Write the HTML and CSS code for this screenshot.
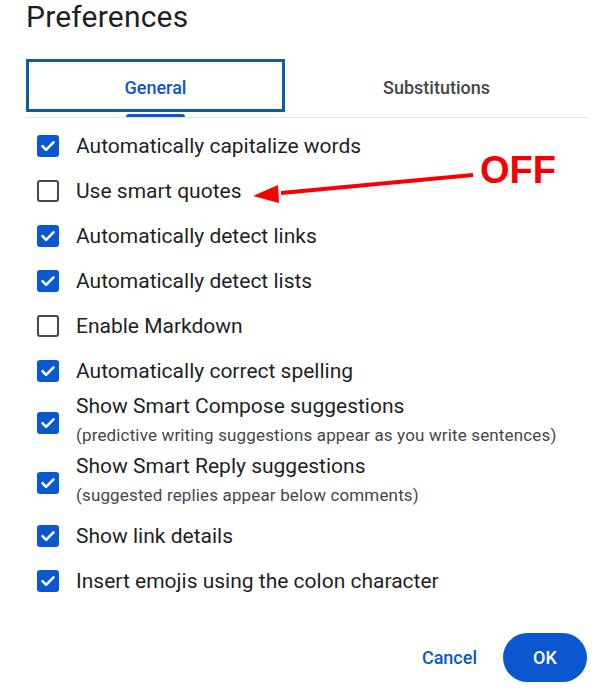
FILE: index.html
```html
<!DOCTYPE html>
<html lang="en">
<head>
<meta charset="utf-8">
<title>Preferences</title>
<link rel="stylesheet" href="styles.css">
</head>
<body>
<div class="dialog">
  <h1 class="title">Preferences</h1>
  <div class="tabs">
    <div class="tab tab-active">
      <div class="tab-label">General</div>
      <div class="tab-indicator"></div>
    </div>
    <div class="tab tab-other">
      <div class="tab-label">Substitutions</div>
    </div>
  </div>
  <ul class="options">
    <li class="option"><span class="box checked"><svg viewBox="0 0 22 22"><path d="M5.5 11.2l3.6 3.6 7.4-7.4" /></svg></span><span class="label">Automatically capitalize words</span></li>
    <li class="option"><span class="box"></span><span class="label">Use smart quotes</span></li>
    <li class="option"><span class="box checked"><svg viewBox="0 0 22 22"><path d="M5.5 11.2l3.6 3.6 7.4-7.4" /></svg></span><span class="label">Automatically detect links</span></li>
    <li class="option"><span class="box checked"><svg viewBox="0 0 22 22"><path d="M5.5 11.2l3.6 3.6 7.4-7.4" /></svg></span><span class="label">Automatically detect lists</span></li>
    <li class="option"><span class="box"></span><span class="label">Enable Markdown</span></li>
    <li class="option"><span class="box checked"><svg viewBox="0 0 22 22"><path d="M5.5 11.2l3.6 3.6 7.4-7.4" /></svg></span><span class="label">Automatically correct spelling</span></li>
    <li class="option option-tall"><span class="box checked"><svg viewBox="0 0 22 22"><path d="M5.5 11.2l3.6 3.6 7.4-7.4" /></svg></span><span class="label-stack"><span class="label">Show Smart Compose suggestions</span><span class="hint">(predictive writing suggestions appear as you write sentences)</span></span></li>
    <li class="option option-tall"><span class="box checked"><svg viewBox="0 0 22 22"><path d="M5.5 11.2l3.6 3.6 7.4-7.4" /></svg></span><span class="label-stack"><span class="label">Show Smart Reply suggestions</span><span class="hint">(suggested replies appear below comments)</span></span></li>
    <li class="option"><span class="box checked"><svg viewBox="0 0 22 22"><path d="M5.5 11.2l3.6 3.6 7.4-7.4" /></svg></span><span class="label">Show link details</span></li>
    <li class="option"><span class="box checked"><svg viewBox="0 0 22 22"><path d="M5.5 11.2l3.6 3.6 7.4-7.4" /></svg></span><span class="label">Insert emojis using the colon character</span></li>
  </ul>
  <div class="actions">
    <button class="btn btn-text">Cancel</button>
    <button class="btn btn-filled">OK</button>
  </div>
  <div class="annotation">
    <svg class="arrow" width="230" height="40" viewBox="0 0 230 40">
      <path class="arrow-line" d="M222 11 L30 29" />
      <path class="arrow-head" d="M2 32 L27 21 L28 39 Z" />
    </svg>
    <span class="off">OFF</span>
  </div>
</div>
</body>
</html>
```

FILE: styles.css
```css
* { box-sizing: border-box; }

html, body {
  margin: 0;
  padding: 0;
  background: #ffffff;
}

body {
  font-family: Roboto, "Noto Sans", Arial, sans-serif;
  color: #1f1f1f;
  width: 596px;
  height: 694px;
  overflow: hidden;
}

.dialog {
  position: relative;
  padding: 0 8px 0 26px;
}

.title {
  margin: 0;
  font-weight: 400;
  font-size: 30px;
  line-height: 33px;
  height: 59px;
  color: #1f1f1f;
  letter-spacing: 0.2px;
}

.tabs {
  display: flex;
  border-bottom: 1px solid #e1e3e1;
  width: 562px;
}

.tab {
  display: flex;
  flex-direction: column;
  align-items: center;
  height: 58px;
}

.tab-active {
  width: 259px;
}

.tab-other {
  flex: 1;
}

.tab-label {
  width: 100%;
  height: 53px;
  display: flex;
  align-items: center;
  justify-content: center;
  font-size: 18px;
  font-weight: 500;
  color: #444746;
  padding-top: 3px;
}

.tab-active .tab-label {
  border: 3px solid #0b5f98;
  color: #0b57d0;
}

.tab-indicator {
  margin-top: 2px;
  width: 59px;
  height: 3px;
  background: #0b57d0;
  border-radius: 3px 3px 0 0;
}

.options {
  list-style: none;
  margin: 0;
  padding: 5px 0 0 11px;
}

.option {
  display: flex;
  align-items: center;
  height: 45px;
  gap: 17px;
}

.option-tall {
  height: 60px;
}

.box {
  flex: none;
  width: 22px;
  height: 22px;
  border: 2px solid #444746;
  border-radius: 3px;
  display: flex;
  align-items: center;
  justify-content: center;
}

.box.checked {
  background: #0b57d0;
  border-color: #0b57d0;
}

.box svg {
  width: 22px;
  height: 22px;
  flex: none;
}

.box svg path {
  fill: none;
  stroke: #ffffff;
  stroke-width: 2.6;
  stroke-linecap: round;
  stroke-linejoin: round;
}

.label {
  font-size: 21px;
  line-height: 26px;
  color: #1f1f1f;
}

.label-stack {
  display: flex;
  flex-direction: column;
  margin-bottom: 8px;
}

.hint {
  font-size: 17px;
  line-height: 22px;
  margin-top: 5px;
  letter-spacing: 0.15px;
  color: #444746;
}

.actions {
  display: flex;
  justify-content: flex-end;
  align-items: center;
  gap: 14px;
  margin-top: 30px;
  padding-right: 1px;
}

.btn {
  font-family: Roboto, "Noto Sans", Arial, sans-serif;
  font-size: 18px;
  font-weight: 500;
  border: none;
  cursor: pointer;
  height: 49px;
  border-radius: 25px;
}

.btn-text {
  background: transparent;
  color: #0b57d0;
  padding: 0 12px;
}

.btn-filled {
  background: #0b57d0;
  color: #ffffff;
  width: 84px;
}

.annotation {
  position: absolute;
  left: 251px;
  top: 150px;
  display: flex;
  align-items: flex-start;
}

.arrow {
  display: block;
  margin-top: 14px;
}

.arrow-line {
  stroke: #f60000;
  stroke-width: 4;
  fill: none;
}

.arrow-head {
  fill: #f60000;
}

.off {
  font-family: "Liberation Sans", Arial, sans-serif;
  font-weight: 700;
  font-size: 38px;
  line-height: 40px;
  color: #f60000;
  margin-left: -1px;
}
```
